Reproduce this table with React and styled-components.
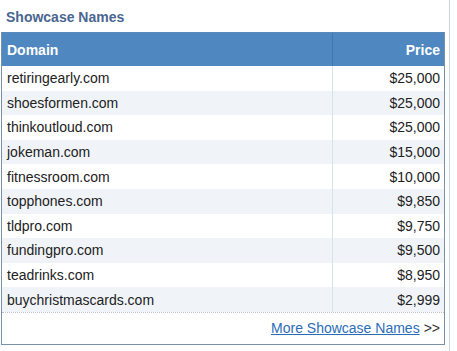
import React from "react";
import styled, { createGlobalStyle } from "styled-components";

const Global = createGlobalStyle`
  html, body { margin: 0; padding: 0; background: #fff; }
  body { font-family: "Liberation Sans", Arial, sans-serif; }
`;

const Frame = styled.div`
  width: 449px;
  height: 351px;
  border-right: 1px solid #c9d5e1;
  box-sizing: content-box;
`;

const Title = styled.h2`
  margin: 0;
  height: 32px;
  padding-left: 6px;
  display: flex;
  align-items: center;
  font-size: 14px;
  font-weight: bold;
  color: #4a6690;
  box-sizing: border-box;
  padding-top: 1px;
`;

const Panel = styled.div`
  margin-left: 1px;
  width: 444px;
  border: 1px solid #7890a8;
  border-top-color: #5a88bb;
  box-sizing: border-box;
`;

const Row = styled.div`
  display: grid;
  grid-template-columns: 330px 1fr;
  height: ${(p) => p.$h}px;
  background: ${(p) => (p.$head ? "#4f87c0" : p.$alt ? "#f0f4f9" : "#ffffff")};
  color: ${(p) => (p.$head ? "#ffffff" : "#222222")};
  font-weight: ${(p) => (p.$head ? "bold" : "normal")};
  font-size: 14px;
`;

const Cell = styled.div`
  display: flex;
  align-items: center;
  justify-content: ${(p) => (p.$right ? "flex-end" : "flex-start")};
  padding: ${(p) => (p.$right ? "0 4px 0 0" : "0 0 0 5px")};
  border-left: ${(p) => (p.$right ? `1px solid ${p.$head ? "#4275ab" : "#d5e3ee"}` : "none")};
  white-space: nowrap;
`;

const Footer = styled.div`
  border-top: 1px dotted #b9c0c8;
  height: 32px;
  display: flex;
  align-items: center;
  justify-content: flex-end;
  padding-right: 4px;
  font-size: 14px;
  color: #333;
  box-sizing: border-box;
`;

const MoreLink = styled.a`
  color: #2b6db9;
  text-decoration: underline;
  margin-right: 4px;
`;

const rows = [
  ["retiringearly.com", "$25,000"],
  ["shoesformen.com", "$25,000"],
  ["thinkoutloud.com", "$25,000"],
  ["jokeman.com", "$15,000"],
  ["fitnessroom.com", "$10,000"],
  ["topphones.com", "$9,850"],
  ["tldpro.com", "$9,750"],
  ["fundingpro.com", "$9,500"],
  ["teadrinks.com", "$8,950"],
  ["buychristmascards.com", "$2,999"],
];

export default function App() {
  return (
    <>
      <Global />
      <Frame>
        <Title>Showcase Names</Title>
        <Panel>
          <Row $head $h={33}>
            <Cell>Domain</Cell>
            <Cell $right $head>Price</Cell>
          </Row>
          {rows.map(([d, p], i) => (
            <Row key={d} $alt={i % 2 === 1} $h={24.6}>
              <Cell>{d}</Cell>
              <Cell $right>{p}</Cell>
            </Row>
          ))}
          <Footer>
            <MoreLink href="#">More Showcase Names</MoreLink>&gt;&gt;
          </Footer>
        </Panel>
      </Frame>
    </>
  );
}
